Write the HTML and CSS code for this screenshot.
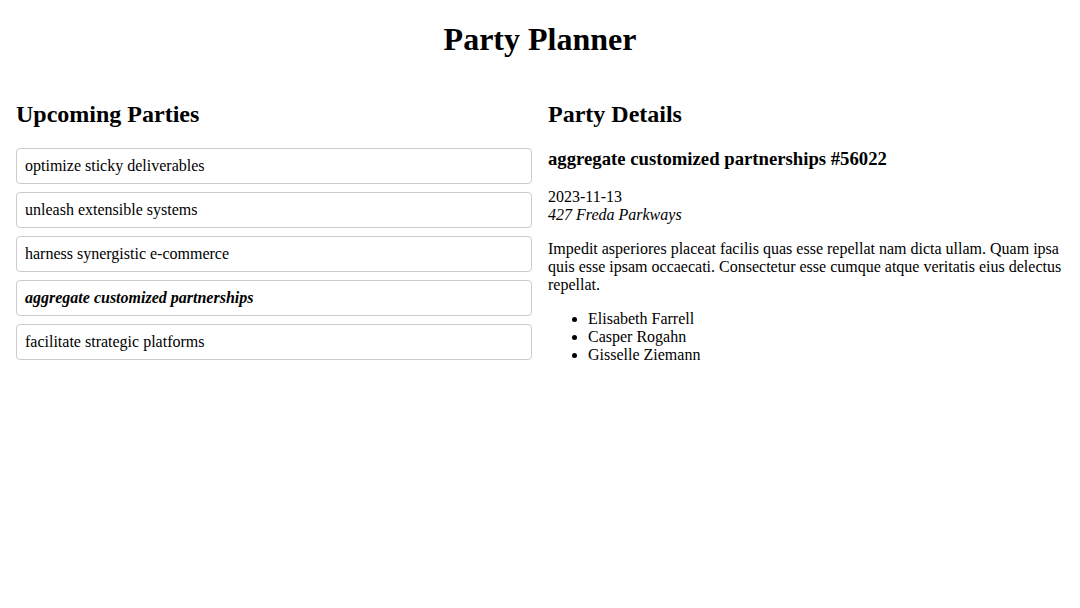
FILE: index.html
```html
<!DOCTYPE html>
<html>
<head>
<meta charset="utf-8">
<title>Party Planner</title>
<link rel="stylesheet" href="styles.css">
</head>
<body>
<h1 class="title">Party Planner</h1>
<main class="layout">
  <section class="col">
    <h2>Upcoming Parties</h2>
    <ul class="party-list">
      <li class="party">optimize sticky deliverables</li>
      <li class="party">unleash extensible systems</li>
      <li class="party">harness synergistic e-commerce</li>
      <li class="party selected">aggregate customized partnerships</li>
      <li class="party">facilitate strategic platforms</li>
    </ul>
  </section>
  <section class="col">
    <h2>Party Details</h2>
    <h3>aggregate customized partnerships #56022</h3>
    <p>2023-11-13<br><em>427 Freda Parkways</em></p>
    <p>Impedit asperiores placeat facilis quas esse repellat nam dicta ullam. Quam ipsa quis esse ipsam occaecati. Consectetur esse cumque atque veritatis eius delectus repellat.</p>
    <ul class="guests">
      <li>Elisabeth Farrell</li>
      <li>Casper Rogahn</li>
      <li>Gisselle Ziemann</li>
    </ul>
  </section>
</main>
</body>
</html>
```
FILE: styles.css
```css
html, body {
  font-family: "Liberation Serif", "Times New Roman", serif;
  font-size: 16px;
  color: #000;
  background: #fff;
}
body {
  margin: 0 8px;
}
.title {
  text-align: center;
  margin-top: 21.44px;
}
.layout {
  display: grid;
  grid-template-columns: 1fr 1fr;
  gap: 16px;
  padding: 1px 8px 0;
}
.col {
  min-width: 0;
}
.party-list {
  list-style: none;
  margin: 0;
  padding: 0;
}
.party {
  border: 1px solid #ccc;
  border-radius: 4px;
  padding: 8px;
  margin-bottom: 8px;
}
.party.selected {
  font-weight: bold;
  font-style: italic;
}
```
